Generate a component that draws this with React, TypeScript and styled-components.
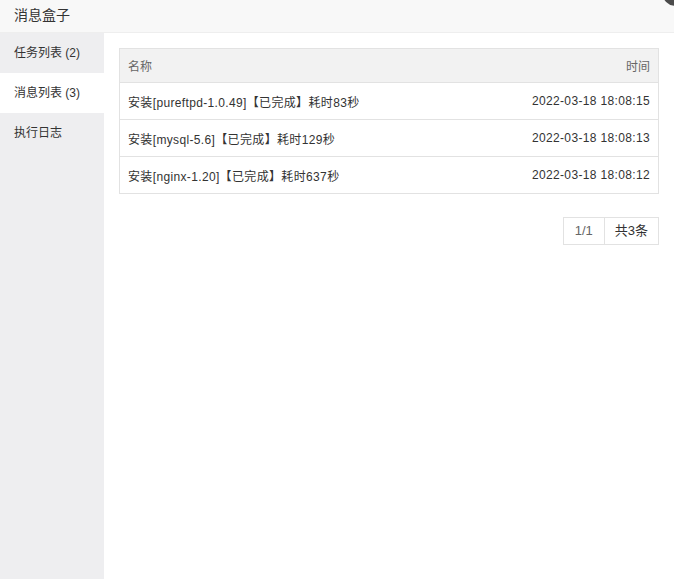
import React from 'react';
import styled, { createGlobalStyle } from 'styled-components';

const GlobalStyle = createGlobalStyle`
  html, body {
    margin: 0;
    padding: 0;
    background: #ffffff;
  }
  body {
    font-family: "Liberation Sans", "Noto Sans CJK SC", sans-serif;
    color: #333;
  }
`;

const Layer = styled.div`
  position: relative;
  width: 674px;
  height: 579px;
  display: flex;
  flex-direction: column;
  overflow: hidden;
  background: #fff;
`;

const TitleBar = styled.div`
  height: 33px;
  box-sizing: border-box;
  flex-shrink: 0;
  display: flex;
  align-items: center;
  padding: 0 0 5px 14px;
  background: #f8f8f8;
  border-bottom: 1px solid #eeeeee;
  font-size: 14px;
  color: #333;
`;

const CloseDot = styled.span`
  position: absolute;
  right: -16px;
  top: -22px;
  width: 28px;
  height: 28px;
  border-radius: 50%;
  background: #4b4b4b;
`;

const Body = styled.div`
  flex: 1;
  display: flex;
`;

const Sidebar = styled.ul`
  width: 104px;
  margin: 0;
  padding: 0;
  list-style: none;
  background: #eeeef0;
`;

const NavItem = styled.li<{ $active?: boolean }>`
  height: 40px;
  line-height: 40px;
  padding-left: 14px;
  font-size: 12px;
  color: #333;
  background: ${p => (p.$active ? '#ffffff' : 'transparent')};
`;

const Content = styled.div`
  flex: 1;
  padding: 15px 15px 0 15px;
  display: flex;
  flex-direction: column;
`;

const Table = styled.table`
  width: 100%;
  border-collapse: collapse;
  border: 1px solid #e2e2e2;
  font-size: 12px;
`;

const HeadCell = styled.th<{ $right?: boolean }>`
  height: 33px;
  padding: 0 8px;
  background: #f2f2f2;
  color: #666;
  font-weight: normal;
  text-align: ${p => (p.$right ? 'right' : 'left')};
  border-bottom: 1px solid #e2e2e2;
`;

const Cell = styled.td<{ $right?: boolean }>`
  height: 36px;
  padding: 0 8px;
  color: #333;
  letter-spacing: 0.35px;
  text-align: ${p => (p.$right ? 'right' : 'left')};
  border-bottom: 1px solid #e2e2e2;
  white-space: nowrap;
`;

const Pager = styled.div`
  display: flex;
  justify-content: flex-end;
  margin-top: 23px;
`;

const PageCell = styled.span<{ $muted?: boolean }>`
  height: 26px;
  line-height: 26px;
  padding: 0 ${p => (p.$muted ? '11px' : '10px')};
  border: 1px solid #e2e2e2;
  font-size: 13px;
  color: ${p => (p.$muted ? '#666' : '#333')};
  & + & {
    border-left: none;
  }
`;

const messages = [
  { name: '安装[pureftpd-1.0.49]【已完成】耗时83秒', time: '2022-03-18 18:08:15' },
  { name: '安装[mysql-5.6]【已完成】耗时129秒', time: '2022-03-18 18:08:13' },
  { name: '安装[nginx-1.20]【已完成】耗时637秒', time: '2022-03-18 18:08:12' },
];

export default function App() {
  return (
    <>
      <GlobalStyle />
      <Layer>
        <TitleBar>消息盒子</TitleBar>
        <CloseDot />
        <Body>
          <Sidebar>
            <NavItem>任务列表 (2)</NavItem>
            <NavItem $active>消息列表 (3)</NavItem>
            <NavItem>执行日志</NavItem>
          </Sidebar>
          <Content>
            <Table>
              <thead>
                <tr>
                  <HeadCell>名称</HeadCell>
                  <HeadCell $right>时间</HeadCell>
                </tr>
              </thead>
              <tbody>
                {messages.map(m => (
                  <tr key={m.time}>
                    <Cell>{m.name}</Cell>
                    <Cell $right>{m.time}</Cell>
                  </tr>
                ))}
              </tbody>
            </Table>
            <Pager>
              <PageCell $muted>1/1</PageCell>
              <PageCell>共3条</PageCell>
            </Pager>
          </Content>
        </Body>
      </Layer>
    </>
  );
}
